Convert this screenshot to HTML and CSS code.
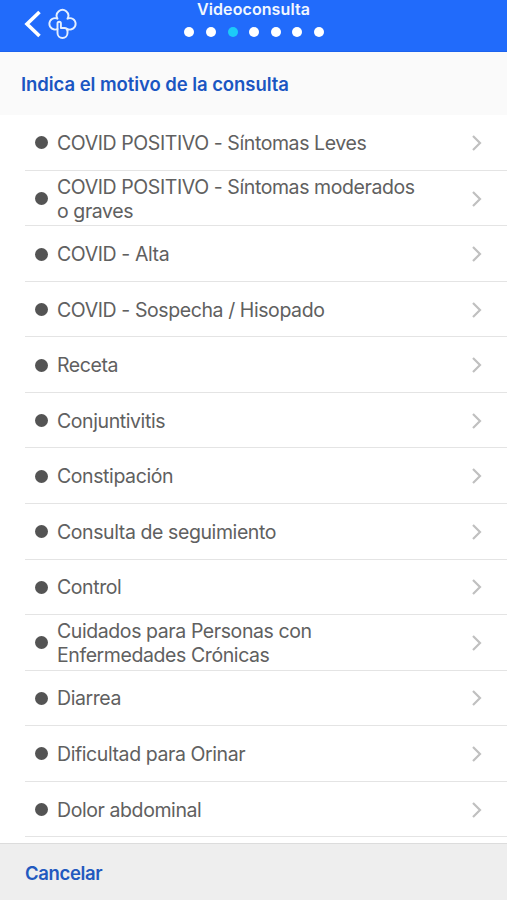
FILE: index.html
```html
<!DOCTYPE html>
<html lang="es">
<head>
<meta charset="utf-8">
<title>Videoconsulta</title>
<link rel="stylesheet" href="styles.css">
</head>
<body>
<svg width="0" height="0" class="defs"><symbol id="chev" viewBox="0 0 12 18"><path d="M2 2l7 7-7 7" fill="none" stroke="currentColor" stroke-width="2.2"/></symbol></svg>
<header class="bar">
  <div class="nav">
    <svg class="back" viewBox="0 0 17 29"><path d="M15.500 3L3 15l12.500 12" fill="none" stroke="#fff" stroke-width="3.600"/></svg>
    <svg class="logo" viewBox="0 0 30 32" fill="none" stroke="#e4efff" stroke-width="1.900" stroke-linejoin="round" stroke-linecap="round"><path d="M9.500 21A5.700 5.700 0 1 1 9.500 10.700A5.800 5.800 0 1 1 19.500 10.700A5.700 5.700 0 1 1 19.500 21V25a5 5 0 0 1-10 0z"/><path d="M9.500 21v-5.500a1.700 1.700 0 0 1 3.400 0v4.500h3.600a3 3 0 0 1 3 2.500"/></svg>
  </div>
  <div class="mid">
    <h1>Videoconsulta</h1>
    <div class="steps"><i></i><i></i><i class="on"></i><i></i><i></i><i></i><i></i></div>
  </div>
</header>
<h2 class="prompt">Indica el motivo de la consulta</h2>
<ul class="list">
  <li><b></b><span>COVID POSITIVO - Síntomas Leves</span><svg><use href="#chev"/></svg></li>
  <li><b></b><span>COVID POSITIVO - Síntomas moderados<br>o graves</span><svg><use href="#chev"/></svg></li>
  <li><b></b><span>COVID - Alta</span><svg><use href="#chev"/></svg></li>
  <li><b></b><span>COVID - Sospecha / Hisopado</span><svg><use href="#chev"/></svg></li>
  <li><b></b><span>Receta</span><svg><use href="#chev"/></svg></li>
  <li><b></b><span>Conjuntivitis</span><svg><use href="#chev"/></svg></li>
  <li><b></b><span>Constipación</span><svg><use href="#chev"/></svg></li>
  <li><b></b><span>Consulta de seguimiento</span><svg><use href="#chev"/></svg></li>
  <li><b></b><span>Control</span><svg><use href="#chev"/></svg></li>
  <li><b></b><span>Cuidados para Personas con<br>Enfermedades Crónicas</span><svg><use href="#chev"/></svg></li>
  <li><b></b><span>Diarrea</span><svg><use href="#chev"/></svg></li>
  <li><b></b><span>Dificultad para Orinar</span><svg><use href="#chev"/></svg></li>
  <li><b></b><span>Dolor abdominal</span><svg><use href="#chev"/></svg></li>
</ul>
<footer class="foot"><a>Cancelar</a></footer>
</body>
</html>
```
FILE: styles.css
```css
* { box-sizing: border-box; }
body { margin: 0; height: 900px; overflow: hidden; display: flex; flex-direction: column; background: #fff; font-family: Inter, "Liberation Sans", sans-serif; }
.defs { display: none; }
.bar { flex: none; height: 52px; background: #216bfb; display: grid; grid-template-columns: 120px 1fr 120px; border-bottom: 1px solid #1c63ee; }
.nav { display: flex; padding: 8px 0 0 24px; }
.back { width: 17px; height: 29px; margin-top: 1px; }
.logo { width: 30px; height: 32px; margin-left: 7px; }
.mid { display: flex; flex-direction: column; align-items: center; }
h1 { margin: 0; color: #f1f7ff; font-size: 16px; line-height: 18px; font-weight: 600; letter-spacing: 0.1px; }
.steps { display: flex; gap: 11.6px; margin: 9px 0 0 1.5px; }
.steps i { width: 10px; height: 10px; border-radius: 50%; background: #fff; }
.steps .on { background: #1ccbf8; }
.prompt { flex: none; margin: 0; height: 63px; padding-left: 21px; background: #fafafa; color: #1a56c2; font-size: 18.5px; line-height: 64px; font-weight: 600; letter-spacing: -0.06px; }
.list { list-style: none; margin: 0; padding: 0.2px 0 0 25px; flex: 1; min-height: 0; overflow: hidden; }
.list li { height: 55.55px; border-bottom: 1px solid #e4e4e4; display: flex; align-items: center; padding: 1px 24px 0 9.5px; }
.list b { width: 13px; height: 13px; border-radius: 50%; background: #545454; margin-right: 9.5px; }
.list span { flex: 1; color: #606060; font-size: 19.5px; line-height: 24px; letter-spacing: -0.41px; white-space: nowrap; }
.list svg { width: 12px; height: 18px; color: #c0c0c0; }
.foot { flex: none; height: 57px; background: #eee; border-top: 1px solid #dcdcdc; padding-left: 25px; color: #2259bf; font-size: 18.5px; line-height: 59px; font-weight: 600; letter-spacing: -0.35px; }
```
